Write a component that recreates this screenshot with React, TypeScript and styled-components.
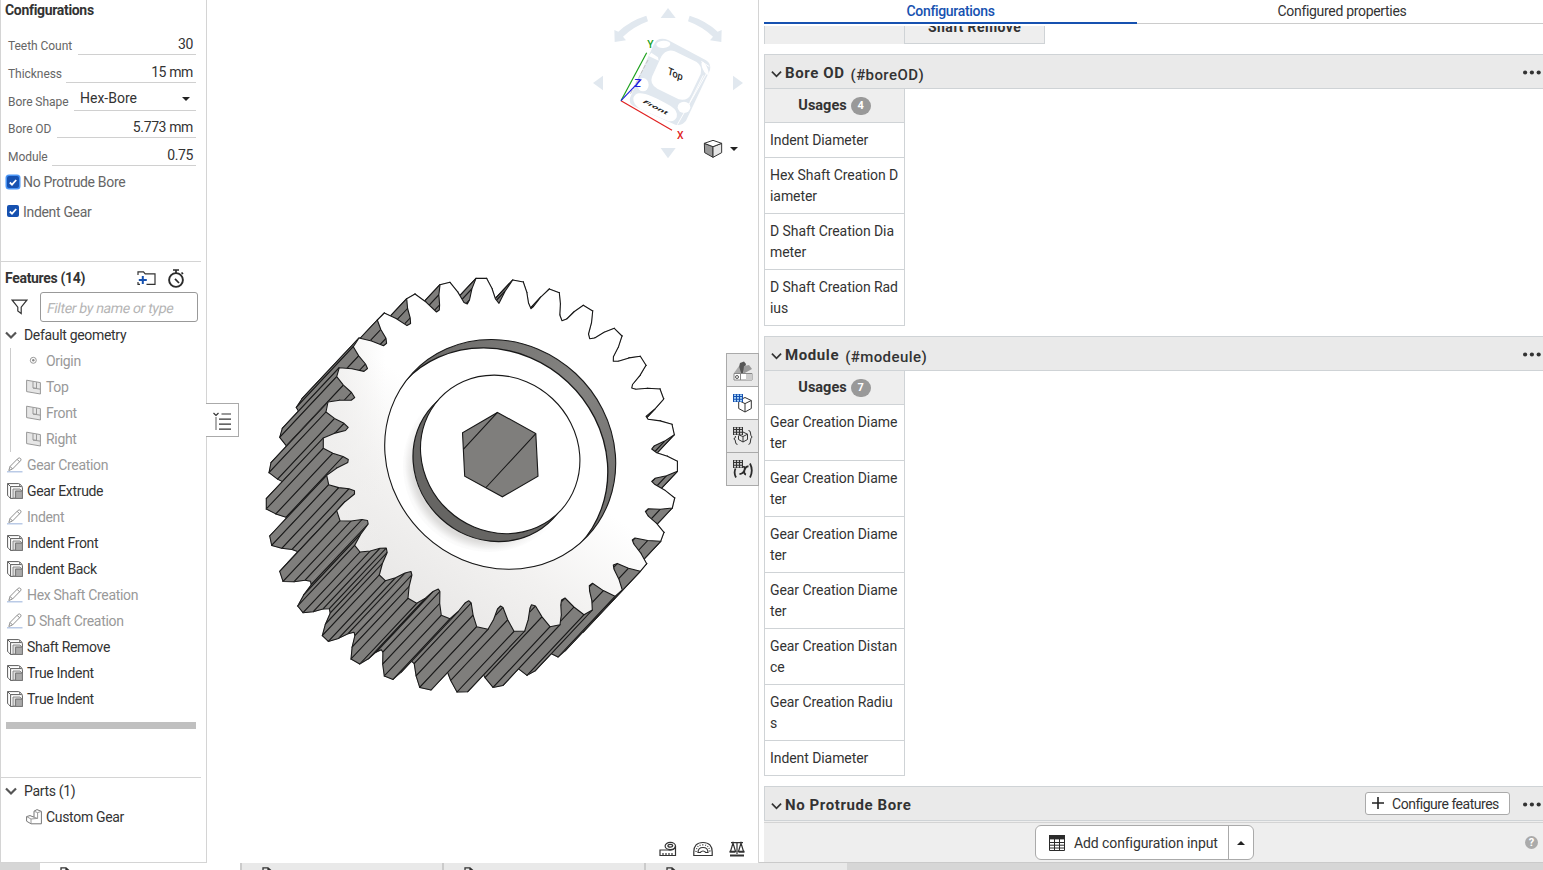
import React from 'react';
import styled, { createGlobalStyle } from 'styled-components';

const Global = createGlobalStyle`
  * { box-sizing: border-box; }
  body { margin: 0; background: #fff; overflow: hidden; }
  body, input, button { font-family: Roboto, "Liberation Sans", sans-serif; font-size: 14px; color: #333; }
  svg { display: block; flex: none; }
`;

/* ---------- page frame ---------- */
const Page = styled.div`
  display: flex; flex-direction: column; width: 1543px; height: 870px; overflow: hidden;
`;
const Main = styled.div`display: flex; height: 863px;`;
const Strip = styled.div`display: flex; height: 7px; background: #d6d6d6; padding-left: 40px; overflow: hidden;`;
const DocTab = styled.div<{ $active?: boolean; $last?: boolean }>`
  width: ${p => (p.$last ? 201 : 202)}px; height: 7px; padding: 4px 0 0 20px; overflow: hidden;
  background: ${p => (p.$active ? '#fff' : '#e9e9e9')};
  border-right: ${p => (p.$last ? 0 : 2)}px solid #cbcbcb;
`;

/* ---------- left panel ---------- */
const Left = styled.aside`
  width: 207px; height: 863px; flex: none; border: 1px solid #d4d4d4; border-top: 0;
  display: flex; flex-direction: column; letter-spacing: -0.32px;
`;
const Block = styled.section<{ $h: number }>`
  height: ${p => p.$h}px; width: 200px; border-bottom: 1px solid #d4d4d4; flex: none;
`;
const Heading = styled.h2`
  margin: 0; font-size: 14px; font-weight: 700; line-height: 20px;
`;
const ConfigHead = styled.div`padding-left: 4px; height: 27px;`;
const Field = styled.div<{ $h: number }>`
  display: flex; height: ${p => p.$h}px; padding-left: 7px; width: 195px;
`;
const FieldLabel = styled.label<{ $w: number }>`
  width: ${p => p.$w}px; flex: none; align-self: flex-end; font-size: 12px; line-height: 18px; color: #666; white-space: nowrap;
  letter-spacing: -0.05px;
`;
const FieldValue = styled.div<{ $select?: boolean }>`
  flex: 1; border-bottom: 1px solid #d0d0d0; display: flex; align-items: flex-end;
  justify-content: ${p => (p.$select ? 'space-between' : 'flex-end')};
  padding: ${p => (p.$select ? '0 6px 3px 6px' : '0 3px 1px 0')}; line-height: 18px; white-space: nowrap;
  letter-spacing: ${p => (p.$select ? 0 : -0.38)}px;
`;
const Caret = styled.span<{ $up?: boolean }>`
  width: 0; height: 0; border: 4px solid transparent; margin-bottom: ${p => (p.$up ? 4 : 2)}px;
  border-${p => (p.$up ? 'bottom' : 'top')}-color: #222;
`;
const Check = styled.label<{ $h: number }>`
  display: flex; align-items: center; height: ${p => p.$h}px; padding-left: 6px; gap: 4px; color: #666;
`;
const Box = styled.span<{ $focus?: boolean }>`
  width: 12px; height: 12px; border-radius: 2px; background: #1651b0; display: flex; align-items: center; justify-content: center;
  margin-bottom: ${p => (p.$focus ? 0 : 2)}px;
  box-shadow: ${p => (p.$focus ? '0 0 0 1.5px #4a95f5' : 'none')};
`;
const FeatHead = styled.div`
  display: flex; align-items: center; height: 30px; padding: 2px 16px 0 4px; justify-content: space-between;
`;
const HeadIcons = styled.div`display: flex; align-items: center; gap: 11px;`;
const FilterRow = styled.div`display: flex; align-items: center; height: 30px; padding-left: 10px; gap: 12px;`;
const FilterInput = styled.div`
  width: 158px; height: 30px; border: 1px solid #999; border-radius: 3px; padding-left: 6px; line-height: 31px;
  color: #b5b5b5; white-space: nowrap;
`;
const Placeholder = styled.span`display: inline-block; transform: skewX(-11deg); letter-spacing: -0.34px;`;
const TreeHead = styled.div`display: flex; align-items: center; height: 26px; padding-left: 4px; gap: 7px;`;
const Geometry = styled.div`
  margin-left: 9px; border-left: 1px solid #ccc; height: 104px; padding-left: 15px; margin-bottom: 0;
`;
const Item = styled.div<{ $muted?: boolean; $indent?: number; $gap?: number }>`
  display: flex; align-items: center; height: 26px; gap: ${p => p.$gap ?? 5}px; white-space: nowrap;
  padding-left: ${p => p.$indent ?? 0}px; color: ${p => (p.$muted ? '#999' : '#333')};
`;
const Rollback = styled.div`margin: 10px 0 0 5px; width: 190px; height: 7px; background: #c0c0c0;`;

/* ---------- viewport ---------- */
const Viewport = styled.main`position: relative; width: 552px; height: 863px; flex: none; border-right: 1px solid #d4d4d4;`;
const Layer = styled.div<{ $x: number; $y: number }>`position: absolute; left: ${p => p.$x}px; top: ${p => p.$y}px;`;
const Flyout = styled.button`
  position: absolute; left: -1px; top: 403px; width: 33px; height: 34px; background: #fff; border: 1px solid #aaa; border-left: 0;
  padding: 2px 0 0; display: flex; align-items: center; justify-content: center;
`;
const SideTabs = styled.div`position: absolute; right: -1px; top: 353px; width: 33px; border: 1px solid #aaa; border-bottom: 0;`;
const SideTab = styled.div<{ $on?: boolean }>`
  height: 33px; background: ${p => (p.$on ? '#fff' : '#e9e9e9')}; border-bottom: 1px solid #aaa;
  display: flex; align-items: center; justify-content: center; padding-top: 1px;
`;
const Measure = styled.div`position: absolute; left: 452px; top: 841px; display: flex; gap: 16px;`;

/* ---------- right panel ---------- */
const Right = styled.aside`width: 784px; height: 863px; padding-left: 5px; display: flex; flex-direction: column; border-bottom: 1px solid #cacaca;`;
const Tabs = styled.div`display: flex; height: 24px; flex: none;`;
const Tab = styled.div<{ $on?: boolean; $w: number }>`
  width: ${p => p.$w}px; flex: none; text-align: center; line-height: 23px; font-weight: ${p => (p.$on ? 500 : 400)};
  color: ${p => (p.$on ? '#1651b0' : '#333')}; letter-spacing: -0.32px;
  padding-left: ${p => (p.$on ? 0 : 4)}px;
  border-bottom: ${p => (p.$on ? '2px solid #1651b0' : '1px solid #ccc')};
`;
const Scroll = styled.div`height: 796px; margin-top: 2px; overflow: hidden; flex: none;`;
const CutRow = styled.div`display: flex; height: 18px; margin-bottom: 10px;`;
const CutCell = styled.div<{ $last?: boolean }>`
  width: ${p => (p.$last ? 140 : 141)}px; background: #eee; border: 0 solid #cfd3d6; border-right-width: 1px;
  border-left-width: ${p => (p.$last ? 0 : 1)}px; border-bottom-width: ${p => (p.$last ? 1 : 0)}px;
  overflow: hidden; text-align: center; font-weight: 700; line-height: 20px; 
  & > span { display: block; margin-top: -9px; letter-spacing: 0.42px; }
`;
const Section = styled.section`margin-bottom: 10px;`;
const SectionHead = styled.header`
  height: 35px; border: 1px solid #cfd3d6; border-right: 0; background: #eaeaea; display: flex; align-items: center;
  padding: 2px 2px 0 6px;
  & > svg:first-child { margin-top: 2px; }
`;
const Title = styled.span`
  font-size: 15px; font-weight: 700; margin-left: 3px; letter-spacing: 0.6px;
`;
const Var = styled.span`font-size: 15px; font-weight: 500; margin: 4px 0 0 6px; letter-spacing: 0.42px;`;
const Push = styled.div`margin-left: auto; display: flex; align-items: center; gap: 13px;`;
const Table = styled.div`width: 141px; border: 1px solid #cfd3d6; border-top: 0;`;
const Usages = styled.div`
  height: 33px; background: #eee; display: flex; align-items: center; justify-content: center; gap: 4px;
  font-weight: 700; font-size: 14.5px;
`;
const Badge = styled.span`
  width: 20px; height: 18px; border-radius: 9px; background: #999; color: #fff; font-size: 11px; line-height: 18px; text-align: center;
`;
const Cell = styled.div`
  border-top: 1px solid #cfd3d6; padding: 7px 5px 6px; line-height: 21px; white-space: pre; letter-spacing: -0.07px;
`;
const SectionTail = styled.div`height: 2px; background: #eee;`;
const ConfigureBtn = styled.button`
  width: 145px; height: 23px; margin-top: -3px; background: #fff; border: 1px solid #aaa; border-radius: 3px; padding: 1px 0 0 6px;
  display: flex; align-items: center; gap: 8px; white-space: nowrap; letter-spacing: -0.48px;
  & > svg { margin-bottom: 2px; }
`;
const Footer = styled.footer`
  height: 40px; background: #eee; border-top: 1px solid #d4d4d4; display: flex; align-items: center; flex: none;
  padding-left: 271px;
`;
const AddGroup = styled.div`display: flex; width: 219px; height: 35px; border: 1px solid #aaa; border-radius: 6px; background: #fff;`;
const AddMain = styled.div`
  width: 193px; border-right: 1px solid #aaa; display: flex; align-items: center; padding-left: 13px; gap: 9px; white-space: nowrap;
  letter-spacing: -0.09px;
`;
const AddMore = styled.div`flex: 1; display: flex; align-items: center; justify-content: center;`;
const Help = styled.span`
  margin-left: auto; margin-right: 5px; width: 13px; height: 13px; border-radius: 50%; background: #aaa; color: #fff;
  font-size: 11px; font-weight: 700; line-height: 13px; text-align: center;
`;

/* ---------- gear model ---------- */
type P = [number, number];
const FACE: P[] = [
  [476, 278.4], [486.7, 278.4], [495.5, 299], [499, 303.3], [512.7, 280], [523.3, 282], [528.5, 303], [531, 308.7], [533.5, 306.5],
  [549.3, 289], [559.3, 292.7], [559.8, 315], [562, 320.7], [566.7, 319], [583.3, 305.3], [592.7, 311], [588.5, 334], [589.7, 338.7],
  [594.7, 338], [614.3, 328.3], [622, 336], [613.4, 356.7], [613.3, 361.3], [618.3, 361.3], [640.3, 356.3], [646, 365.3],
  [632.5, 384.5], [631.7, 388], [635.7, 389.3], [660, 389], [663.7, 399], [646, 416.3], [648, 419.3], [672, 424.3], [674.3, 434.7],
  [654, 446], [651.7, 449], [656.7, 452.7], [677.4, 461.3], [677.4, 471.3], [655, 478.3], [651.7, 481.3], [655, 484.6], [674.7, 498],
  [672.3, 508], [648.3, 508.7], [645.4, 511.5], [648, 515.8], [664, 532.3], [660.7, 541.3], [635, 538], [632.3, 540], [633.8, 544],
  [646.7, 563.7], [640.3, 571.3], [617.3, 563.4], [613.3, 565], [613.9, 569], [622.3, 590], [615, 596.3], [592.5, 583.3],
  [589.3, 585.7], [589.6, 591], [592.3, 610], [584, 614.7], [565, 598], [561.5, 600], [560.8, 605], [560, 624.7], [550, 626.7],
  [535.5, 606], [531.5, 604.8], [530, 608], [524.7, 631], [514, 631.3], [503, 607.5], [500.5, 606], [497.5, 609], [488, 629.3],
  [476.7, 626.7], [471.2, 603], [468.7, 600.7], [465, 603], [450, 618.7], [441.3, 615.3], [439.9, 591.5], [438.3, 589], [433, 591.5],
  [416.7, 603.3], [408, 598.3], [411.9, 575], [411, 571.5], [405, 573], [385.3, 580.7], [379.3, 575], [387.2, 552.5], [386.3, 548],
  [380, 548.2], [360, 552], [354.7, 545.3], [368.2, 524], [367.5, 520.5], [362, 519.5], [340, 520.7], [336.7, 510.7], [354.5, 494],
  [354.5, 490.8], [349, 488.7], [328.7, 484.7], [326.7, 475.3], [347.8, 462.5], [348.3, 459.5], [343, 456.5], [323.3, 448.3],
  [323.3, 438], [345.5, 430.5], [348.2, 427.3], [344, 423.3], [326, 412], [328, 402], [351.5, 400.2], [354.7, 397.5], [351.5, 392.5],
  [336.7, 376.7], [339.3, 367.7], [364, 371.4], [367.5, 368.5], [365.5, 364], [353.3, 346.7], [359, 338], [383.5, 345.8],
  [386.6, 343.3], [386, 338.3], [377.3, 320], [384.3, 313], [407, 325.6], [410.6, 323.5], [410.2, 318], [406.7, 298.7], [415, 294],
  [436.5, 312], [439.3, 310], [439.6, 305], [440, 284.7], [450, 282.3], [464, 302.5], [467.3, 304], [469.5, 300],
];
const SHIFT: P = [-57, 60.7];
const INK = '#181818';
const STEEL = '#7f7e7c';

/* long flanks get one extra point with a slight outward bow */
const outline: P[] = FACE.flatMap((a, i) => {
  const b = FACE[(i + 1) % FACE.length];
  const dx = b[0] - a[0], dy = b[1] - a[1], len = Math.hypot(dx, dy);
  if (len < 14) return [a];
  const k = 0.9 / len;
  return [a, [a[0] + dx * 0.5 + dy * k, a[1] + dy * 0.5 - dx * k] as P];
});
const gap = (a: P, b: P) => Math.hypot(a[0] - b[0], a[1] - b[1]);
const depth = (p: P) => p[0] * SHIFT[0] + p[1] * SHIFT[1];
const count = outline.length;
/* a vertex in the middle of a root fillet carries no visible edge */
const creased = outline.map((p, i) => gap(p, outline[(i + count - 1) % count]) > 6.2 || gap(p, outline[(i + 1) % count]) > 6.2);
const walls = outline
  .map((a, i) => ({ a, b: outline[(i + 1) % count], ea: creased[i], eb: creased[(i + 1) % count] }))
  .sort((m, n) => depth(m.a) + depth(m.b) - depth(n.a) - depth(n.b));
const moved = (p: P): P => [p[0] + SHIFT[0], p[1] + SHIFT[1]];
const line = (pts: P[]) => 'M' + pts.map(p => p.map(n => n.toFixed(1)).join(' ')).join('L');
const toPath = (pts: P[]) => line(pts) + 'Z';

const Gear = () => (
  <svg width="551" height="862" viewBox="207 0 551 862">
    <defs>
      <linearGradient id="face" gradientUnits="userSpaceOnUse" x1="400" y1="590" x2="500" y2="440">
        <stop offset="0" stopColor="#e9e8e7" /><stop offset=".45" stopColor="#f2f1f0" /><stop offset="1" stopColor="#fff" />
      </linearGradient>
      <linearGradient id="side" gradientUnits="userSpaceOnUse" x1="325" y1="0" x2="385" y2="0">
        <stop offset="0" stopColor="#efeeed" /><stop offset="1" stopColor="#efeeed" stopOpacity="0" />
      </linearGradient>
      <radialGradient id="floor" gradientUnits="userSpaceOnUse" cx="492" cy="463" r="115">
        <stop offset=".69" stopColor="#dcdbda" /><stop offset=".76" stopColor="#fafafa" /><stop offset=".84" stopColor="#fff" />
        <stop offset=".92" stopColor="#fff" /><stop offset="1" stopColor="#f2f1f0" />
      </radialGradient>
      <linearGradient id="lit" gradientUnits="userSpaceOnUse" x1="445" y1="510" x2="490" y2="465">
        <stop offset="0" stopColor="#fff" stopOpacity="0" /><stop offset="1" stopColor="#fff" />
      </linearGradient>
      <linearGradient id="rim" gradientUnits="userSpaceOnUse" x1="420" y1="340" x2="615" y2="540">
        <stop offset="0" stopColor="#6c6b69" /><stop offset=".5" stopColor="#858482" /><stop offset="1" stopColor="#6c6b69" />
      </linearGradient>
      <linearGradient id="boss" gradientUnits="userSpaceOnUse" x1="420" y1="400" x2="560" y2="540">
        <stop offset="0" stopColor="#666563" /><stop offset=".3" stopColor="#807f7d" /><stop offset=".6" stopColor="#5e5d5b" /><stop offset="1" stopColor="#7c7b79" />
      </linearGradient>
      <clipPath id="recess"><ellipse rx="119.6" ry="110.6" transform="translate(500.2 454.4) rotate(43)" /></clipPath>
    </defs>
    {walls.map(({ a, b, ea, eb }, i) => (
      <g key={i} fill="none" stroke={INK} strokeWidth="1.05" strokeLinecap="round">
        <path d={toPath([a, b, moved(b), moved(a)])} fill={STEEL} stroke={STEEL} strokeWidth=".6" />
        <path d={line([moved(a), moved(b)]) + (ea ? line([a, moved(a)]) : '') + (eb ? line([b, moved(b)]) : '')} />
      </g>
    ))}
    <path d={toPath(outline)} fill="url(#face)" />
    <path d={toPath(outline)} fill="url(#side)" stroke={INK} strokeWidth="1.1" strokeLinejoin="round" />
    <g clipPath="url(#recess)">
      <rect x="370" y="330" width="260" height="250" fill="url(#rim)" />
      <g transform="translate(492.3 462.8) rotate(43)">
        <ellipse rx="119.6" ry="110.6" fill="#fff" />
      </g>
      <g clipPath="url(#recess)">
        <ellipse rx="119.6" ry="110.6" transform="translate(492.3 462.8) rotate(43)" fill="none" stroke={INK} strokeWidth="1.3" />
      </g>
      <circle cx="489" cy="466" r="86" fill="url(#floor)" />
      <circle cx="489" cy="466" r="87" fill="url(#lit)" />
    </g>
    <ellipse rx="119.6" ry="110.6" transform="translate(500.2 454.4) rotate(43)" fill="none" stroke={INK} strokeWidth="1.1" />
    <ellipse rx="82.5" ry="76.4" transform="translate(492.7 462.4) rotate(43)" fill="url(#boss)" stroke={INK} strokeWidth="1.2" />
    <ellipse rx="82.5" ry="76.4" transform="translate(500.2 454.4) rotate(43)" fill="#fff" stroke={INK} strokeWidth="1.1" />
    <path d="M497.5 412.4 535.8 433.6 538 476.2 502.4 496.8 464.7 476.2 462.5 432.8Z" fill={STEEL} stroke={INK} strokeWidth="1.1" />
    <path d="M497.5 412.4 463.3 449.3M535.8 433.6 486 487.5" stroke={INK} strokeWidth="1.1" />
  </svg>
);

const ViewCube = () => (
  <svg width="180" height="170" viewBox="0 0 540 510">
    <g fill="#e1e8ef">
      <path d="M264 24 287 54H242ZM264 475 242 444H287ZM39 249 69 227V271ZM489 249 459 227V271Z" />
      <path d="M199 47Q150 62 115 95L103 90 104 126 138 121 129 110Q163 79 204 64ZM329 47Q378 62 413 95L425 90 424 126 390 121 399 110Q365 79 324 64Z" />
      <path d="M232 120Q246 112 264 120L378 181Q394 190 390 210L318 362Q306 378 286 374L160 318Q146 310 150 294Q180 220 214 150Q222 128 232 120Z" />
    </g>
    <path d="M204 180 150 284" stroke="#c4c4c4" strokeDasharray="12 5" strokeWidth="3" />
    <g fill="#fff">
      <path d="M262 154Q272 149 284 154L350 186Q368 198 362 222L332 284Q322 304 296 298L232 266Q208 252 216 230L240 178Q248 158 262 154Z" />
      <path d="M176 280Q200 276 272 318Q296 334 290 352Q282 368 262 362L182 328Q158 312 160 294Q164 282 176 280Z" />
      <ellipse cx="250" cy="133" rx="21" ry="11" transform="rotate(-4 250 133)" />
      <ellipse cx="189" cy="254" rx="17" ry="20" />
      <ellipse cx="312" cy="322" rx="19" ry="17" />
      <ellipse cx="375" cy="205" rx="7" ry="21" transform="rotate(-24 375 205)" />
      <path d="M206 168 236 182 234 172 214 158Z" />
    </g>
    <path d="M382 216 292 374M370 226 330 306M364 184 388 200" stroke="#fff" strokeWidth="3" fill="none" />
    <g strokeWidth="3.5" fill="none">
      <path d="M123 302 200 158" stroke="#1aa01a" /><path d="M123 302 276 391" stroke="#e02020" /><path d="M123 302 184 238" stroke="#2020e0" />
    </g>
    <g fontFamily="Roboto, sans-serif" textAnchor="middle">
      <text x="211" y="143" fontSize="31" fontWeight="500" fill="#1aa01a">Y</text>
      <text x="301" y="417" fontSize="31" fontWeight="500" fill="#e02020">X</text>
      <text x="173" y="260" fontSize="31" fontWeight="500" fill="#2020e0">Z</text>
      <text transform="matrix(.9 .4 -.2 1 284 232)" fontSize="30" fontWeight="500" fill="#222">Top</text>
      <text transform="matrix(1.02 .52 -.5 .3 222 325)" fontSize="30" fontWeight="700" fill="#222">Front</text>
    </g>
    <g stroke="#333" strokeWidth="3" strokeLinejoin="round">
      <path d="M373 430 399 440V472L374 458Z" fill="#999" /><path d="M399 440 425 430V458L399 472Z" fill="#e6e6e6" />
      <path d="M373 430 399 421 425 430 399 440Z" fill="#fff" />
    </g>
    <path d="M450 441H474L462 453Z" fill="#222" />
  </svg>
);

/* ---------- icons ---------- */
const Chevron = ({ w = 12, sw = 2.2, c = '#555' }) => (
  <svg width={w} height="12" viewBox="0 0 12 12"><path d="M1 3.5 6 8.5 11 3.5" fill="none" stroke={c} strokeWidth={sw} /></svg>
);
const Plane = () => (
  <svg width="15" height="16" viewBox="0 0 15 16"><path d="M.6 1.2 14.4 3.6V15L.6 12.6Z" fill="#e6e6e6" stroke="#999" /><path d="M7 2.5V9L14.4 10.2M7 9 10.5 9.4V3.2" fill="none" stroke="#999" /></svg>
);
const Origin = () => (
  <svg width="15" height="16" viewBox="0 0 15 16"><circle cx="7.3" cy="7.3" r="3" fill="none" stroke="#999" /><circle cx="7.3" cy="7.3" r="1.2" fill="#888" /></svg>
);
const Pencil = () => (
  <svg width="16" height="16" viewBox="0 0 16 16"><path d="M1.8 13.5 3.1 9.4 11.1 1.3Q12.5.4 13.7 1.7 14.5 2.8 13.5 3.8L5.5 12 1.8 13.5ZM3.1 9.4 5.5 12M10.1 2.4 12.7 4.8" fill="none" stroke="#8f8f8f" /><path d="M0 14.8H15.5" stroke="#a9bde0" strokeWidth="1.2" /></svg>
);
const Extrude = () => (
  <svg width="16" height="16" viewBox="0 0 16 16" fill="none" stroke="#5c5c5c"><path d="M12.6 2.8V1.5Q12.6.6 11.6.6H.6V12Q.6 13 1.5 13.4L3.6 15.4M.6.6 3.6 3.6M3.6 15.4V3.6H14.4Q15.4 3.6 15.4 4.6V15.4H3.6M12.6.8 15.2 3.6" /><path d="M6 15V6H13L15 8.2H8.6V15Z" fill="#ddd" stroke="#888" /><path d="M8.6 15.4V8.2H15.4V15.4Z" fill="#aaa" stroke="#777" /></svg>
);
const Part = () => (
  <svg width="16" height="16" viewBox="0 0 16 16" fill="#fff" stroke="#777" strokeLinejoin="round"><path d="M.6 7.6 4 6.6 8 8.2V2.2L11 .6 15.4 2.4V14.8H5L.6 12.2Z" /><path d="M.6 7.6 5 10V14.8M5 10 11.6 9.4V3.6L8 2.2M11.6 3.6 15.4 2.4M8 8.2 11.6 9.4" fill="none" stroke="#999" /></svg>
);
const FolderPlus = () => (
  <svg width="19" height="15" viewBox="0 0 19 15" fill="none"><path d="M1 4V.8H6.5L8.2 2.8H18V13.4H9.5M1 11V13.4H3" stroke="#333" strokeWidth="1.2" /><path d="M5.8 5V13M1.8 9H9.8" stroke="#1651b0" strokeWidth="2" /></svg>
);
const Stopwatch = () => (
  <svg width="18" height="19" viewBox="0 0 18 19" fill="none" stroke="#2b2b2b"><circle cx="9" cy="11" r="6.9" strokeWidth="1.9" /><path d="M6 1H12M9 1V4M14.5 3.5 16 5" strokeWidth="1.7" /><path d="M8 9.8 12 14" strokeWidth="1.7" /></svg>
);
const Funnel = () => (
  <svg width="17" height="16" viewBox="0 0 17 16"><path d="M1.2 1.2H15.8L10.2 8.2V14.6L6.8 12V8.2Z" fill="none" stroke="#333" strokeWidth="1.2" /></svg>
);
const GridCells = ({ c, light }: { c: string; light: string }) => (
  <g stroke="none"><rect x="0" y="0" width="10" height="8" fill={c} /><path d="M1 1.2H9M1 3.9H9M1 6.6H9" stroke={light} strokeWidth="1.6" strokeDasharray="2 1" /></g>
);
const CubeLines = () => <path d="M12 3.5 18.3 6.5V14.5L12 18 5.7 14.5V6.5ZM5.7 6.5 12 9.6 18.3 6.5M12 9.6V18" fill="none" stroke="#333" />;
const Dots = () => (
  <svg width="18" height="5" viewBox="0 0 18 5" fill="#333"><circle cx="2.1" cy="2.5" r="2.1" /><circle cx="8.9" cy="2.5" r="2.1" /><circle cx="15.7" cy="2.5" r="2.1" /></svg>
);
const FileIcon = () => (
  <svg width="12" height="14" viewBox="0 0 12 14"><path d="M1 13V.8H6L9.5 4V13M6 .8V4H9.5" fill="none" stroke="#333" strokeWidth="1.3" /></svg>
);
const TickIcon = () => (
  <svg width="8" height="7" viewBox="0 0 8 7"><path d="M.8 3.5 3 5.6 7.2 1" fill="none" stroke="#fff" strokeWidth="1.8" /></svg>
);

/* ---------- data ---------- */
const fields: [string, number, number, string][] = [
  ['Teeth Count', 70, 28, '30'], ['Thickness', 58, 28, '15 mm'], ['Bore Shape', 66, 28, 'Hex-Bore'], ['Bore OD', 49, 27, '5.773 mm'], ['Module', 44, 28, '0.75'],
];
const features: [string, boolean][] = [
  ['Gear Creation', true], ['Gear Extrude', false], ['Indent', true], ['Indent Front', false], ['Indent Back', false],
  ['Hex Shaft Creation', true], ['D Shaft Creation', true], ['Shaft Remove', false], ['True Indent', false], ['True Indent', false],
];
const boreRows = ['Indent Diameter', 'Hex Shaft Creation D\niameter', 'D Shaft Creation Dia\nmeter', 'D Shaft Creation Rad\nius'];
const gearDia = 'Gear Creation Diame\nter';
const moduleRows = [gearDia, gearDia, gearDia, gearDia, 'Gear Creation Distan\nce', 'Gear Creation Radiu\ns', 'Indent Diameter'];

const UsageTable = ({ rows }: { rows: string[] }) => (
  <Table>
    <Usages>Usages <Badge>{rows.length}</Badge></Usages>
    {rows.map((r, i) => <Cell key={i}>{r}</Cell>)}
  </Table>
);

export default function App() {
  return (
    <Page>
      <Global />
      <Main>
        <Left>
          <Block $h={262}>
            <ConfigHead><Heading>Configurations</Heading></ConfigHead>
            {fields.map(([l, w, h, v]) => (
              <Field key={l} $h={h}>
                <FieldLabel $w={w}>{l}</FieldLabel>
                <FieldValue $select={l === 'Bore Shape'}>{v}{l === 'Bore Shape' && <Caret />}</FieldValue>
              </Field>
            ))}
            <Check $h={32}><Box $focus><TickIcon /></Box>No Protrude Bore</Check>
            <Check $h={28}><Box><TickIcon /></Box>Indent Gear</Check>
          </Block>
          <Block $h={516}>
            <FeatHead><Heading>Features (14)</Heading><HeadIcons><FolderPlus /><Stopwatch /></HeadIcons></FeatHead>
            <FilterRow><Funnel /><FilterInput><Placeholder>Filter by name or type</Placeholder></FilterInput></FilterRow>
            <TreeHead><Chevron />Default geometry</TreeHead>
            <Geometry>
              <Item $muted><Origin />Origin</Item>
              {['Top', 'Front', 'Right'].map(n => <Item $muted key={n}><Plane />{n}</Item>)}
            </Geometry>
            {features.map(([n, m], i) => (
              <Item key={i} $muted={m} $indent={6} $gap={4}>{m ? <Pencil /> : <Extrude />}{n}</Item>
            ))}
            <Rollback />
          </Block>
          <TreeHead><Chevron />Parts (1)</TreeHead>
          <Item $indent={25} $gap={4}><Part />Custom Gear</Item>
        </Left>

        <Viewport>
          <Layer $x={0} $y={0}><Gear /></Layer>
          <Layer $x={373} $y={0}><ViewCube /></Layer>
          <Flyout>
            <svg width="19" height="18" viewBox="0 0 19 18" fill="none" stroke="#333"><path d="M.5 1 3 3.5 5.5 1M8.5 2H18M6 7.2H18M6 12.2H18M6 17.2H18" strokeWidth="1.2" /><path d="M3 5V18" stroke="#999" strokeWidth="1.6" /></svg>
          </Flyout>
          <SideTabs>
            <SideTab>
              <svg width="20" height="20" viewBox="0 0 20 20"><path d="M7 2 11 .5 13 3 10 12 4 14Z" fill="#555" /><path d="M11 5 16 4 19 8 10 13Z" fill="#999" /><path d="M1 12 6 5 8 12Z" fill="#aaa" /><path d="M1 12.5H19V19H1Z" fill="#fff" stroke="#888" /><path d="M13 13H19V19H13Z" fill="#ccc" /><circle cx="4" cy="16" r="1.5" fill="none" stroke="#555" /><path d="M7.5 13V19" stroke="#888" /></svg>
            </SideTab>
            <SideTab $on>
              <svg width="20" height="19" viewBox="0 0 20 19"><CubeLines /><GridCells c="#1651b0" light="#a9d3f5" /></svg>
            </SideTab>
            <SideTab>
              <svg width="20" height="19" viewBox="0 0 20 19" fill="none" stroke="#333"><path d="M10 5 14.5 7.2V12.5L10 15 5.5 12.5V8.5M10 9.5 14.5 7.2M10 9.5V15M10 9.5 6 8M2.5 9Q2.5 11.5.8 11.8 2.5 12 2.5 15 2.5 17.4 4.5 17.4M15.5 3.5Q17.5 3.5 17.5 6 17.5 9.5 19.2 10 17.5 10.5 17.5 14 17.5 17.4 15.5 17.4" /><GridCells c="#333" light="#ccc" /></svg>
            </SideTab>
            <SideTab>
              <svg width="20" height="19" viewBox="0 0 20 19" fill="none" stroke="#2b2b2b" strokeWidth="1.8"><path d="M2.5 8.5Q.5 13 3 17.5M17 3.5Q20.6 10.5 17 17.5" /><path d="M10 7Q12.5 6 11.5 10T13 14.5M15.5 6.5Q13 6 11.5 10T6.5 14" strokeWidth="1.8" /><GridCells c="#333" light="#ccc" /></svg>
            </SideTab>
          </SideTabs>
          <Measure>
            <svg width="18" height="16" viewBox="0 0 18 16" fill="none" stroke="#333" strokeWidth="1.2"><path d="M1 9H9Q16.5 9.5 16.5 5V14.5H1ZM4 14V12M7 14V12M10 14V12M13 14V12" /><ellipse cx="11.3" cy="5" rx="5.2" ry="3.6" /><ellipse cx="11.3" cy="4.8" rx="2.4" ry="1.4" /></svg>
            <svg width="20" height="16" viewBox="0 0 20 16" fill="none" stroke="#333" strokeWidth="1.2"><path d="M.8 14.5V11Q.8 1.5 10 1.5T19.2 11V14.5ZM5 11.5Q5 6.5 10 6.5T15 11.5H12.8Q10 8.5 7.2 11.5Z" /><path d="M3 11Q3.5 3.8 10 3.8T17 11" strokeDasharray="1 1.6" /></svg>
            <svg width="16" height="16" viewBox="0 0 16 16" fill="none" stroke="#333" strokeWidth="1.2"><path d="M2 1.7H14M8 1V13M4 2 1.5 10.5H6.5ZM12 2 9.5 10.5H14.5Z" /><path d="M.5 10.7H6.5M9.5 10.7H15.5M1 14.5H15" strokeWidth="2" /></svg>
          </Measure>
        </Viewport>

        <Right>
          <Tabs><Tab $on $w={373}>Configurations</Tab><Tab $w={406}>Configured properties</Tab></Tabs>
          <Scroll>
            <CutRow><CutCell /><CutCell $last><span>Shaft Remove</span></CutCell></CutRow>
            <Section>
              <SectionHead><Chevron w={11} c="#333" sw={1.9} /><Title>Bore OD</Title><Var>(#boreOD)</Var><Push><Dots /></Push></SectionHead>
              <UsageTable rows={boreRows} />
            </Section>
            <Section>
              <SectionHead><Chevron w={11} c="#333" sw={1.9} /><Title>Module</Title><Var>(#modeule)</Var><Push><Dots /></Push></SectionHead>
              <UsageTable rows={moduleRows} />
            </Section>
            <Section>
              <SectionHead>
                <Chevron w={11} c="#333" sw={1.9} /><Title>No Protrude Bore</Title>
                <Push>
                  <ConfigureBtn><svg width="12" height="12" viewBox="0 0 12 12"><path d="M6 0V12M0 6H12" stroke="#222" strokeWidth="1.6" /></svg>Configure features</ConfigureBtn>
                  <Dots />
                </Push>
              </SectionHead>
              <SectionTail />
            </Section>
          </Scroll>
          <Footer>
            <AddGroup>
              <AddMain>
                <svg width="16" height="16" viewBox="0 0 16 16" stroke="#2b2b2b" fill="none"><path d="M.5.5H15.5V15.5H.5ZM.5 7.5H15.5M.5 10.2H15.5M.5 13H15.5M5.5 4V15M10.5 4V15" /><path d="M0 2.2H16" strokeWidth="4.4" /></svg>
                Add configuration input
              </AddMain>
              <AddMore><Caret $up /></AddMore>
            </AddGroup>
            <Help>?</Help>
          </Footer>
        </Right>
      </Main>
      <Strip>
        <DocTab $active><FileIcon /></DocTab>
        <DocTab><FileIcon /></DocTab>
        <DocTab><FileIcon /></DocTab>
        <DocTab $last><FileIcon /></DocTab>
      </Strip>
    </Page>
  );
}
